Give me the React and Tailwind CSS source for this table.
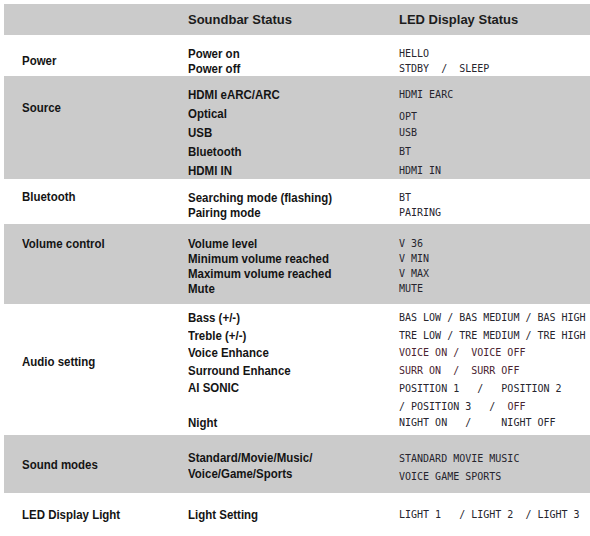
import React from 'react';

const narrow = "font-['Liberation_Sans',Arial,sans-serif] font-bold text-[13.5px] text-[#141414] whitespace-nowrap";
const led = "font-['DejaVu_Sans_Mono','Liberation_Mono',monospace] text-[10px] whitespace-pre text-[#26252e]";
const ledRed = "font-['DejaVu_Sans_Mono','Liberation_Mono',monospace] text-[10px] whitespace-pre text-[#4a2430]";

// condensed bold text: Arial bold squeezed a little
function T({ children }) {
  return <div className="origin-left scale-x-[0.85]">{children}</div>;
}

function Band({ gray, height, labelPad, labelLh = 'leading-[15px]', label, padTop, children }) {
  return (
    <div className={`ml-[4px] flex ${gray ? 'bg-[#cbcbcb]' : 'bg-white'}`} style={{ height }}>
      <div className={`w-[184px] shrink-0 pl-[18px] ${narrow} ${labelLh}`} style={{ paddingTop: labelPad }}>
        <T>{label}</T>
      </div>
      <div className="flex-1 flex flex-col" style={{ paddingTop: padTop }}>
        {children}
      </div>
    </div>
  );
}

function Line({ status, display, lh = 'h-[15px] leading-[15px]', red, ledPad = '' }) {
  return (
    <div className={`flex ${lh}`}>
      <div className={`w-[211px] shrink-0 ${narrow} ${lh}`}>
        <T>{status}</T>
      </div>
      <div className={`${red ? ledRed : led} ${ledPad}`}>{display}</div>
    </div>
  );
}

export default function App() {
  return (
    <div className="w-[590px] h-[536px] bg-white overflow-hidden pt-[4px]">
      {/* header */}
      <div className="ml-[4px] h-[31px] bg-[#cbcbcb] flex items-center font-['Liberation_Sans',Arial,sans-serif] font-bold text-[13px] text-[#1c1c1c]">
        <div className="w-[184px] shrink-0" />
        <div className="w-[211px] shrink-0">Soundbar Status</div>
        <div>LED Display Status</div>
      </div>

      <Band height={41} labelPad={18} label="Power" padTop={11}>
        <Line status="Power on" display="HELLO" />
        <Line status="Power off" display="STDBY  /  SLEEP" />
      </Band>

      <Band gray height={103} labelPad={24} label="Source" padTop={9}>
        <Line lh="h-[19px] leading-[19px]" status="HDMI eARC/ARC" display="HDMI EARC" />
        <Line lh="h-[19px] leading-[19px]" status="Optical" display="OPT" ledPad="pt-[3px]" />
        <Line lh="h-[19px] leading-[19px]" status="USB" display="USB" />
        <Line lh="h-[19px] leading-[19px]" status="Bluetooth" display="BT" />
        <Line lh="h-[19px] leading-[19px]" status="HDMI IN" display="HDMI IN" />
      </Band>

      <Band height={45} labelPad={10} label="Bluetooth" padTop={11}>
        <Line status="Searching mode (flashing)" display="BT" />
        <Line status="Pairing mode" display="PAIRING" />
      </Band>

      <Band gray height={80} labelPad={12} label="Volume control" padTop={12}>
        <Line status="Volume level" display="V 36" />
        <Line status="Minimum volume reached" display="V MIN" />
        <Line status="Maximum volume reached" display="V MAX" />
        <Line status="Mute" display="MUTE" />
      </Band>

      <Band height={131} labelPad={49} labelLh="leading-[17.5px]" label="Audio setting" padTop={5}>
        <Line lh="h-[17.5px] leading-[17.5px]" status="Bass (+/-)" display="BAS LOW / BAS MEDIUM / BAS HIGH" />
        <Line lh="h-[17.5px] leading-[17.5px]" status="Treble (+/-)" display="TRE LOW / TRE MEDIUM / TRE HIGH" />
        <Line lh="h-[17.5px] leading-[17.5px]" red status="Voice Enhance" display="VOICE ON /  VOICE OFF" />
        <Line lh="h-[17.5px] leading-[17.5px]" red status="Surround Enhance" display="SURR ON  /  SURR OFF" />
        <div className="flex h-[35px] leading-[17.5px]">
          <div className={`w-[211px] shrink-0 ${narrow} leading-[17.5px]`}>
            <T>AI SONIC</T>
          </div>
          <div className={`${led} pt-[1px]`}>
            <div>POSITION 1   /   POSITION 2</div>
            <div>/ POSITION 3   /  <span className="text-[#4a2430]">OFF</span></div>
          </div>
        </div>
        <Line lh="h-[17.5px] leading-[17.5px]" status="Night" display="NIGHT ON   /     NIGHT OFF" />
      </Band>

      <Band gray height={58} labelPad={22} label="Sound modes" padTop={15}>
        <div className="flex">
          <div className={`w-[211px] shrink-0 ${narrow} leading-[16px]`}>
            <T>Standard/Movie/Music/</T>
            <T>Voice/Game/Sports</T>
          </div>
          <div className={`${led} leading-[17.5px]`}>
            <div>STANDARD MOVIE MUSIC</div>
            <div>VOICE GAME SPORTS</div>
          </div>
        </div>
      </Band>

      <Band height={43} labelPad={14} label="LED Display Light" padTop={14}>
        <Line status="Light Setting" display="LIGHT 1   / LIGHT 2  / LIGHT 3" />
      </Band>
    </div>
  );
}
